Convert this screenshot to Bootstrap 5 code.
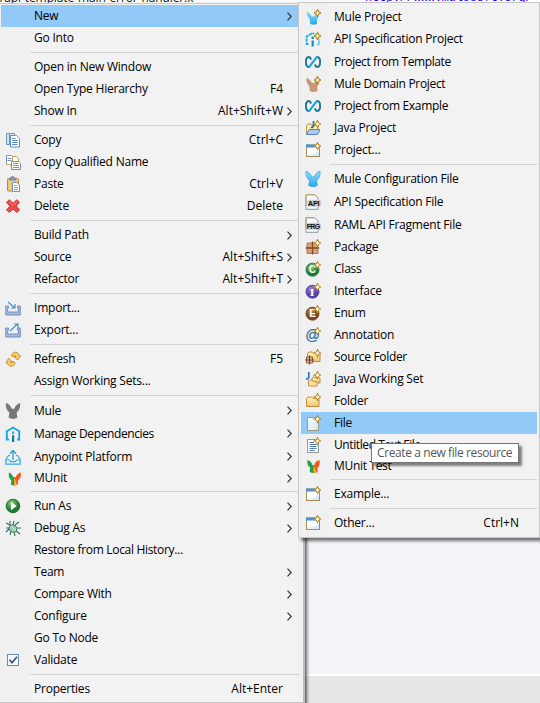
<!DOCTYPE html>
<html lang="en">
<head>
<meta charset="utf-8">
<title>Context menu</title>
<link href="https://cdn.jsdelivr.net/npm/bootstrap@5.3.0/dist/css/bootstrap.min.css" rel="stylesheet">
<style>
body{width:540px;height:703px;overflow:hidden;background:#f3f4f7;font-family:"Open Sans","Noto Sans",sans-serif;font-size:12px;letter-spacing:-.22px;color:#000}
.editor-strip{height:10px;background:#fff;overflow:hidden}
.tab-title{line-height:12px;margin-top:-8px;width:195px;white-space:nowrap;font-size:12px;letter-spacing:-.1px;color:#111}
.code-bit{line-height:12px;margin-top:-8px;color:#2a00ff;font-family:"Liberation Mono",monospace;font-size:12px;font-style:italic}
.editor-body{height:664px}
.status-bar{height:29px;background:#e6e7e9;border-top:2px solid #fff}
.ctx{position:absolute;background:linear-gradient(90deg,#f0f0f0 30px,#f2f2f2 30px);border:1px solid #c8c8c8}
.ctx-main{left:0;top:3px;width:305px;height:700px;padding:1px 2px 0 1px;border-left-width:0;border-right-width:2px;border-right-color:#bcbcbc;box-shadow:2px 2px 3px #0009}
.ctx-sub{left:298px;top:2px;width:242px;height:536px;padding:3px 2px 0 2px;border-color:#c6c6c6;box-shadow:3px 3px 3px #0008}
.mi{height:22px;line-height:22px;white-space:nowrap;padding-left:4px}
.mi>svg,.mi>.blank{width:16px;height:16px;flex:none;margin-right:13px}
.h23{height:23px;line-height:23px}.h20{height:20px;line-height:20px}
.hot{background:#91c9f7}
.snug{letter-spacing:-.32px}
.tight{letter-spacing:-.4px}
.keys{padding-right:2px;letter-spacing:0}
.ctx-sub .keys{padding-right:18px}
.mi>svg.arr{width:5px;height:9px;margin-right:9px}
.mi>.keys+svg.arr{margin-left:2px}
.rule{height:7px;padding:3px 1px 3px 29px}
.ctx-sub .rule{padding:3px 0 3px 29px}
.rule>div{height:1px;background:#d3d3d3}
.tip{position:absolute;left:371px;top:443px;width:148px;height:20px;line-height:18px;background:#fff;border:1px solid #767676;color:#575757;padding-left:5px;white-space:nowrap;box-shadow:3px 3px 2px #0007;letter-spacing:-.4px}
</style>
</head>
<body class="m-0">
<svg width="0" height="0" class="position-absolute" aria-hidden="true">
<defs>
<linearGradient id="gy" x2="0" y2="1"><stop stop-color="#fff3bd"/><stop offset="1" stop-color="#f0c66a"/></linearGradient>
<linearGradient id="gb" x2="0" y2="1"><stop stop-color="#8fdcff"/><stop offset="1" stop-color="#29a9e8"/></linearGradient>
<linearGradient id="gw" x2="1" y2="1"><stop stop-color="#fff"/><stop offset="1" stop-color="#cfe4f5"/></linearGradient>
<radialGradient id="gg" cx=".4" cy=".3"><stop stop-color="#8fd07c"/><stop offset="1" stop-color="#1f7a37"/></radialGradient>
<radialGradient id="gp" cx=".4" cy=".3"><stop stop-color="#9a85d6"/><stop offset="1" stop-color="#55419f"/></radialGradient>
<radialGradient id="gn" cx=".4" cy=".3"><stop stop-color="#b98a50"/><stop offset="1" stop-color="#774618"/></radialGradient>
<symbol id="plus" viewBox="0 0 16 16"><path d="M12.500.5 13.600 2.900 16 4l-2.400 1.100-1.100 2.400-1.100-2.400L9 4l2.400-1.100z" fill="#fff5c2" stroke="#b68a2c" stroke-width="1.100"/><path d="M12.500 2.300v3.400M10.800 4h3.400" stroke="#fff" stroke-width=".8"/></symbol>
<symbol id="plusb" viewBox="0 0 16 16"><path d="M12.500.2 13.800 2.700 16 4l-2.200 1.300-1.300 2.500-1.300-2.500L9 4l2.200-1.300z" fill="#c7a044" stroke="#a88128"/><path d="M12.500 2.200v3.600M10.700 4h3.600" stroke="#fff6cf" stroke-width="1"/></symbol>
<symbol id="ears" viewBox="0 0 16 16"><path d="M1 0c2.700.8 5 3 5.600 5.800h2.800C10 3 12.300.8 15 0c.7 3.800-.6 7.500-3.300 9.200.2 1.800.2 3.400.8 5.300Q8 17.300 3.500 14.500c.6-1.900.7-3.500.8-5.300C1.600 7.500.3 3.800 1 0z"/></symbol>
<symbol id="i-mule" viewBox="0 0 16 16"><use href="#ears" fill="#777"/></symbol>
<symbol id="i-config" viewBox="0 0 16 16"><use href="#ears" fill="url(#gb)" stroke="#2ba3dc" stroke-width=".6"/></symbol>
<symbol id="i-munit" viewBox="0 0 16 16"><path d="M4 2.500c2 .7 3.500 2.400 4 4.500h1.500v8.500q-2 .2-3.600-1l.5-4.300C3.800 8.400 3.200 5.300 4 2.500z" fill="#21a34a"/><path d="M15.900 2.500c-2.800.7-4.500 2.400-5 4.500H9.500L9 15.500q2.500 0 4.100-1.300l-.2-3.800c2.600-1.900 3.300-4.800 3-7.900z" fill="#f4581f"/><path d="M9.500 7.500 12 15l-3 .5z" fill="#ffb329"/></symbol>
<symbol id="i-munit2" viewBox="0 0 16 16"><path d="M2.500 2c2.600.7 4.300 2.600 4.900 5H9v8q-2.500.2-4.300-1l.4-4.400C2.600 8 1.900 5.300 2.500 2z" fill="#21a34a"/><path d="M14.500 2c-3 .7-4.700 2.600-5.200 5H8.500v8q2.500 0 4.100-1l-.2-4c2.200-2 2.600-4.600 2.100-8z" fill="#f4581f"/><path d="m8.800 7 2.600 7.500-2.900.5z" fill="#ffb329"/></symbol>
<symbol id="i-muleproj" viewBox="0 0 16 16"><path d="M2 2.500c2.300 1 4 2.800 4.500 4.700L9 7.500l2-2.500 3 2-2 3.500v4.200q-3.500 2-7 0l-.2-4.500C2.300 8.300 1.500 5.300 2 2.500z" fill="url(#gb)"/><use href="#plusb"/></symbol>
<symbol id="i-domain" viewBox="0 0 16 16"><path d="M2 2.500c2.300 1 4 2.800 4.500 4.700L9 7.500l2-2.500 3 2-2 3.500v4.200q-3.500 2-7 0l-.2-4.500C2.300 8.300 1.500 5.300 2 2.500z" fill="#c99678" stroke="#ad7659" stroke-width=".5"/><use href="#plusb"/></symbol>
<symbol id="house" viewBox="0 0 16 16"><path d="M4 13.500H1.800V5.200L8 1.500l6.200 3.700v8.300H12" fill="none" stroke="#16a7e0" stroke-width="1.900"/><path d="M7 5.500h2.200V8H7z" fill="#35ade0"/><path d="M7 9.200h2.200V16H7z" fill="#1876a3"/></symbol>
<symbol id="i-api" viewBox="0 0 16 16"><path d="M3.500 13H1.600V5.500L7.500 2l2 1" fill="none" stroke="#20ade3" stroke-width="1.800" stroke-dasharray="3.500 .6"/><path d="M13.800 8v5.500H12" fill="none" stroke="#66c8ec" stroke-width="1.600"/><path d="M6.600 5.500h2.200V8H6.600zM6.600 9.500h2.200v6H6.600z" fill="#168bc4"/><use href="#plusb" y="1"/></symbol>
<symbol id="i-loop" viewBox="0 0 16 16"><path d="M6.200 5.500 4.800 3.200H2.500L1 5.500v5l1.500 2.300h2.300M9.800 10.500l1.400 2.300h2.300L15 10.500v-5l-1.500-2.300h-2.300" fill="none" stroke="#12708f" stroke-width="1.800" stroke-linejoin="round"/><path d="M4.300 12.800 11.700 3.200" fill="none" stroke="#11a7dc" stroke-width="2.100"/></symbol>
<symbol id="i-platform" viewBox="0 0 16 16"><path d="M5 6.500H3.500L.8 10.500v4.700h14.400v-4.700l-2.700-4H11M1 11h3.500l1 1.700h5l1-1.700H15" fill="#e7f6fc" stroke="#3aa5da" stroke-width="1.200"/><path d="M8 11V2M5 4.700 8 1.500l3 3.200" fill="none" stroke="#2a9bd3" stroke-width="1.300"/></symbol>
<symbol id="i-copy" viewBox="0 0 16 16"><path d="M1.500 1.500h3v11h-3z" fill="#d7e3ea" stroke="#6c99a5"/><path d="M4.500 1.500h5v11h-5z" fill="#e2eef5" stroke="#7895a6"/><path d="M5.500 3.500h6l3 3v8.500h-9z" fill="#fff" stroke="#688fb3"/><path d="M9.500 3.500h2l3 3v2" fill="none" stroke="#bd9b4d"/><path d="M7 6.500h3.500m-3.500 2h5.500m-5.500 2h5.500m-5.500 2h5.500" stroke="#5b8cc3"/></symbol>
<symbol id="i-qcopy" viewBox="0 0 16 16"><path d="M1.500 1.500h5l2 2v7h-7z" fill="#fff" stroke="#8492b0"/><path d="M2.500 4.500h4m-4 2h4" stroke="#7193c4"/><path d="M7.500 2.500h4l2 2v6h-6z" fill="#fff" stroke="#bd9d56"/><path d="M1.500 10.500h4" stroke="#d0aa51"/><path d="M6.500 7.500h7l2 2v6h-9z" fill="#fff" stroke="#718ab1"/><path d="M8 9.500h5m-5 2h6m-6 2h6" stroke="#6f92c8"/></symbol>
<symbol id="i-paste" viewBox="0 0 16 16"><rect x="2.500" y="2.500" width="11" height="12.500" rx="1" fill="#f3c57c" stroke="#b98645"/><path d="M4.500 4V2.500L6.300.8h2.500l1.800 1.700V4z" fill="#8799bd" stroke="#60749f" stroke-width=".7"/><path d="M7.500 6.500h4.200l2.800 2.500v6.500h-7z" fill="#fff" stroke="#6c96b5"/><path d="M9 9.500h3m-3 2h4m-4 2h4" stroke="#6499d0" stroke-width=".9"/></symbol>
<symbol id="i-delete" viewBox="0 0 16 16"><path d="m4.200 1.700 3.900 3.500 3.800-3.500 2.800 2.700-3.500 3.700 3.500 3.700-2.800 2.700L8.100 11l-3.900 3.500-2.700-2.700L5 8.100 1.500 4.400z" fill="#ed4848" stroke="#c93b42" stroke-linejoin="round"/><path d="m4 3.700 4 3.600 4-3.600" fill="none" stroke="#ff8989" stroke-width=".9"/></symbol>
<symbol id="tray" viewBox="0 0 16 16"><path d="M3.500 6H.7v9h14.600V6h-2.800v2h.8v4H2.700V8h.8z" fill="#a9bce0" stroke="#617fb7" stroke-width=".8"/></symbol>
<symbol id="i-import" viewBox="0 0 16 16"><use href="#tray"/><path d="m3 2 6.500 5.800M6 8h4V4" fill="none" stroke="#4a91bd" stroke-width="1.200"/></symbol>
<symbol id="i-export" viewBox="0 0 16 16"><use href="#tray"/><path d="m5 9 7.500-7M9 2h4v4" fill="none" stroke="#4a91bd" stroke-width="1.200"/></symbol>
<symbol id="i-refresh" viewBox="0 0 16 16"><g fill="#f8cf6c" stroke="#c0831f" stroke-width=".9" stroke-linejoin="round"><path d="M6.500 5C7 2 9.500.5 12 1.500c1.300.5 1.800 1.500 2 3l1.500.3L12.500 9 9.200 5.500l1.800-.2c-.3-1.300-1.200-1-1.600.7z"/><path d="M10 11.500c-.5 3-3 4.300-5.500 3.300-1.300-.5-1.900-1.500-2-3L1 11.500l2.700-4.200L7 10.800l-1.700.2c.3 1.300 1.300 1 1.700-.7z"/></g></symbol>
<symbol id="i-run" viewBox="0 0 16 16"><circle cx="8" cy="8" r="6.800" fill="url(#gg)" stroke="#276f3b"/><path d="m6 3.800 5.500 4.200L6 12.200z" fill="#fff"/></symbol>
<symbol id="i-debug" viewBox="0 0 16 16"><path d="M5 1v4L1 3m0 5h4l-4 4m5-1-1 4m4-3 1 4m1-5 4 3m-3-6h4M10 5l4-3M8 5l1-4" fill="none" stroke="#336e66" stroke-width="1.100"/><ellipse cx="8.300" cy="8.500" rx="4" ry="3.500" transform="rotate(35 8 8)" fill="#9ecfab" stroke="#32766b"/><path d="m6 6 5 5" stroke="#e4f5db"/></symbol>
<symbol id="i-check" viewBox="0 0 16 16"><rect x="2.500" y="2.500" width="11" height="11" fill="#f3f8fd" stroke="#7189aa"/><path d="m4.500 7.800 2.500 3 5-6" fill="none" stroke="#354b74" stroke-width="1.600"/></symbol>
<symbol id="fold" viewBox="0 0 16 16"><path d="M1.500 13.500V5.500L3 4h3.500L8 5.500h6v8z" fill="url(#gy)" stroke="#c08b3f"/></symbol>
<symbol id="i-java" viewBox="0 0 16 16"><path d="M1.500 14V5.500L3 4h3l1 1.500h6V10" fill="#fff0b2" stroke="#bb9147"/><path d="M4 9.500h11l-2.500 5h-11z" fill="#acc9f2" stroke="#5a80c2"/><path d="M8.500 1v4.500q0 2-2.500 1.800" fill="none" stroke="#2b6b91" stroke-width="1.700"/><use href="#plus"/></symbol>
<symbol id="i-window" viewBox="0 0 16 16"><rect x="1.500" y="3" width="13" height="11.500" fill="url(#gw)" stroke="#a28d55"/><path d="M1 2.500h13v3H1z" fill="#4b91d2"/><path d="M2 6h12v2Q10 13 2 12z" fill="#fff"/><use href="#plus"/></symbol>
<symbol id="doc" viewBox="0 0 16 16"><path d="M1 .7h8.500L13 4v11.300H1z" fill="#f8fbff" stroke="#8598ab"/><path d="M1 12V.7h8.500L13 4" fill="none" stroke="#b7a66c"/></symbol>
<symbol id="i-apidoc" viewBox="0 0 16 16"><use href="#doc"/><rect x="2.500" y="5.700" width="13.500" height="7" rx="2" fill="#ccc"/><text x="2.800" y="12" font-family="Liberation Sans,sans-serif" font-size="7.500" font-weight="700" letter-spacing="-.3" fill="#111">API</text></symbol>
<symbol id="i-frg" viewBox="0 0 16 16"><use href="#doc"/><rect x="2" y="5.700" width="14" height="7" rx="2" fill="#ccc"/><text x="1.700" y="12" font-family="Liberation Sans,sans-serif" font-size="7" font-weight="700" letter-spacing="-.6" fill="#111">FRG</text></symbol>
<symbol id="i-package" viewBox="0 0 16 16"><path d="M2 4h11v10.500H2z" fill="#d7a178" stroke="#b77b56"/><path d="M7.500 2.500v13M.8 9h13.400" stroke="#804928" stroke-width="1.300"/><use href="#plus"/></symbol>
<symbol id="i-class" viewBox="0 0 16 16"><circle cx="7.500" cy="8.700" r="6.500" fill="url(#gg)" stroke="#287d40"/><text x="3.800" y="12.400" font-family="Liberation Sans,sans-serif" font-size="10" font-weight="700" fill="#fff">C</text><use href="#plus"/></symbol>
<symbol id="i-iface" viewBox="0 0 16 16"><circle cx="7.500" cy="8.700" r="6.500" fill="url(#gp)" stroke="#5d48a6"/><text x="4.800" y="12.500" font-family="DejaVu Serif,serif" font-size="10" font-weight="700" fill="#fff">I</text><use href="#plus"/></symbol>
<symbol id="i-enum" viewBox="0 0 16 16"><circle cx="7.500" cy="8.700" r="6.500" fill="url(#gn)" stroke="#805025"/><text x="4.200" y="12.300" font-family="Liberation Sans,sans-serif" font-size="10" font-weight="700" fill="#fff">E</text><use href="#plus"/></symbol>
<symbol id="i-annot" viewBox="0 0 16 16"><text x=".2" y="13" font-family="Liberation Sans,sans-serif" font-size="14.500" fill="#276da1" stroke="#276da1" stroke-width=".2">@</text><use href="#plus"/></symbol>
<symbol id="i-source" viewBox="0 0 16 16"><use href="#fold" x="1" y="-1"/><path d="M1.500 8h6v6h-6z" fill="#dfb693" stroke="#8d5b3c"/><path d="M4.500 6.500v9M0 11h9" stroke="#68402b"/><use href="#plus"/></symbol>
<symbol id="i-jws" viewBox="0 0 16 16"><path d="M3.800 1v5q0 2-2.800 1.800" fill="none" stroke="#2d75ad" stroke-width="1.700"/><path d="M7 11V7l1-1h2l1 1h4v5z" fill="url(#gy)" stroke="#bd8744"/><path d="M3.500 15v-5l1-1h2.500l1 1.500h4V15z" fill="#ffe0a3" stroke="#c88a4b"/><use href="#plus"/></symbol>
<symbol id="i-folder" viewBox="0 0 16 16"><use href="#fold"/><use href="#plus"/></symbol>
<symbol id="i-file" viewBox="0 0 16 16"><path d="M2.500 2.500h8L13.500 6v9.500h-11z" fill="url(#gw)" stroke="#9b9984"/><use href="#plus"/></symbol>
<symbol id="i-text" viewBox="0 0 16 16"><path d="M2.500 2.500h8L13.500 6v9.500h-11z" fill="#fff" stroke="#8f9b9b"/><path d="M4.500 5.500H9m-4.500 2h7m-7 2h7m-7 2h7m-7 2h5" stroke="#557dbb"/><use href="#plus"/></symbol>
<symbol id="i-arr" viewBox="0 0 5 9"><path d="m.5.7 3.700 3.800L.5 8.300" fill="none" stroke="#333" stroke-width="1.200"/></symbol>
</defs>
</svg>

<div class="editor-strip d-flex"><div class="tab-title overflow-hidden">/api-template-main-error-handler.x</div><div class="bg-light flex-fill"></div><div class="code-bit">&nbsp;http://www.mulesoft.org/&nbsp;</div></div>
<div class="editor-body"></div>
<div class="status-bar"></div>

<nav class="ctx ctx-main" aria-label="Project menu">
<div class="mi hot d-flex align-items-center"><span class="blank"></span><span>New</span><svg class="arr ms-auto"><use href="#i-arr"/></svg></div>
<div class="mi d-flex align-items-center"><span class="blank"></span><span>Go Into</span></div>
<div class="rule"><div></div></div>
<div class="mi d-flex align-items-center"><span class="blank"></span><span>Open in New Window</span></div>
<div class="mi d-flex align-items-center"><span class="blank"></span><span>Open Type Hierarchy</span><span class="keys ms-auto me-3">F4</span></div>
<div class="mi d-flex align-items-center"><span class="blank"></span><span>Show In</span><span class="keys ms-auto">Alt+Shift+W</span><svg class="arr"><use href="#i-arr"/></svg></div>
<div class="rule"><div></div></div>
<div class="mi d-flex align-items-center"><svg><use href="#i-copy"/></svg><span>Copy</span><span class="keys ms-auto me-3">Ctrl+C</span></div>
<div class="mi d-flex align-items-center"><svg><use href="#i-qcopy"/></svg><span>Copy Qualified Name</span></div>
<div class="mi d-flex align-items-center"><svg><use href="#i-paste"/></svg><span>Paste</span><span class="keys ms-auto me-3">Ctrl+V</span></div>
<div class="mi d-flex align-items-center"><svg><use href="#i-delete"/></svg><span>Delete</span><span class="keys snug ms-auto me-3">Delete</span></div>
<div class="rule"><div></div></div>
<div class="mi d-flex align-items-center"><span class="blank"></span><span>Build Path</span><svg class="arr ms-auto"><use href="#i-arr"/></svg></div>
<div class="mi d-flex align-items-center"><span class="blank"></span><span>Source</span><span class="keys ms-auto">Alt+Shift+S</span><svg class="arr"><use href="#i-arr"/></svg></div>
<div class="mi d-flex align-items-center"><span class="blank"></span><span>Refactor</span><span class="keys ms-auto">Alt+Shift+T</span><svg class="arr"><use href="#i-arr"/></svg></div>
<div class="rule"><div></div></div>
<div class="mi d-flex align-items-center"><svg><use href="#i-import"/></svg><span>Import...</span></div>
<div class="mi d-flex align-items-center"><svg><use href="#i-export"/></svg><span>Export...</span></div>
<div class="rule"><div></div></div>
<div class="mi d-flex align-items-center"><svg><use href="#i-refresh"/></svg><span>Refresh</span><span class="keys ms-auto me-3">F5</span></div>
<div class="mi d-flex align-items-center"><span class="blank"></span><span>Assign Working Sets...</span></div>
<div class="rule"><div></div></div>
<div class="mi h23 d-flex align-items-center"><svg><use href="#i-mule"/></svg><span>Mule</span><svg class="arr ms-auto"><use href="#i-arr"/></svg></div>
<div class="mi h23 d-flex align-items-center"><svg><use href="#house"/></svg><span class="tight">Manage Dependencies</span><svg class="arr ms-auto"><use href="#i-arr"/></svg></div>
<div class="mi h23 d-flex align-items-center"><svg><use href="#i-platform"/></svg><span>Anypoint Platform</span><svg class="arr ms-auto"><use href="#i-arr"/></svg></div>
<div class="mi h20 d-flex align-items-center"><svg><use href="#i-munit"/></svg><span>MUnit</span><svg class="arr ms-auto"><use href="#i-arr"/></svg></div>
<div class="rule"><div></div></div>
<div class="mi d-flex align-items-center"><svg><use href="#i-run"/></svg><span>Run As</span><svg class="arr ms-auto"><use href="#i-arr"/></svg></div>
<div class="mi d-flex align-items-center"><svg><use href="#i-debug"/></svg><span>Debug As</span><svg class="arr ms-auto"><use href="#i-arr"/></svg></div>
<div class="mi d-flex align-items-center"><span class="blank"></span><span class="snug">Restore from Local History...</span></div>
<div class="mi d-flex align-items-center"><span class="blank"></span><span>Team</span><svg class="arr ms-auto"><use href="#i-arr"/></svg></div>
<div class="mi d-flex align-items-center"><span class="blank"></span><span>Compare With</span><svg class="arr ms-auto"><use href="#i-arr"/></svg></div>
<div class="mi d-flex align-items-center"><span class="blank"></span><span>Configure</span><svg class="arr ms-auto"><use href="#i-arr"/></svg></div>
<div class="mi d-flex align-items-center"><span class="blank"></span><span>Go To Node</span></div>
<div class="mi d-flex align-items-center"><svg><use href="#i-check"/></svg><span>Validate</span></div>
<div class="rule"><div></div></div>
<div class="mi d-flex align-items-center"><span class="blank"></span><span>Properties</span><span class="keys ms-auto me-3">Alt+Enter</span></div>
</nav>

<nav class="ctx ctx-sub" aria-label="New">
<div class="mi d-flex align-items-center"><svg><use href="#i-muleproj"/></svg><span>Mule Project</span></div>
<div class="mi d-flex align-items-center"><svg><use href="#i-api"/></svg><span>API Specification Project</span></div>
<div class="mi h23 d-flex align-items-center"><svg><use href="#i-loop"/></svg><span class="tight">Project from Template</span></div>
<div class="mi d-flex align-items-center"><svg><use href="#i-domain"/></svg><span class="snug">Mule Domain Project</span></div>
<div class="mi d-flex align-items-center"><svg><use href="#i-loop"/></svg><span class="snug">Project from Example</span></div>
<div class="mi d-flex align-items-center"><svg><use href="#i-java"/></svg><span>Java Project</span></div>
<div class="mi d-flex align-items-center"><svg><use href="#i-window"/></svg><span>Project...</span></div>
<div class="rule"><div></div></div>
<div class="mi d-flex align-items-center"><svg><use href="#i-config"/></svg><span>Mule Configuration File</span></div>
<div class="mi h23 d-flex align-items-center"><svg><use href="#i-apidoc"/></svg><span>API Specification File</span></div>
<div class="mi h23 d-flex align-items-center"><svg><use href="#i-frg"/></svg><span>RAML API Fragment File</span></div>
<div class="mi d-flex align-items-center"><svg><use href="#i-package"/></svg><span>Package</span></div>
<div class="mi d-flex align-items-center"><svg><use href="#i-class"/></svg><span>Class</span></div>
<div class="mi d-flex align-items-center"><svg><use href="#i-iface"/></svg><span>Interface</span></div>
<div class="mi d-flex align-items-center"><svg><use href="#i-enum"/></svg><span>Enum</span></div>
<div class="mi d-flex align-items-center"><svg><use href="#i-annot"/></svg><span>Annotation</span></div>
<div class="mi d-flex align-items-center"><svg><use href="#i-source"/></svg><span class="snug">Source Folder</span></div>
<div class="mi d-flex align-items-center"><svg><use href="#i-jws"/></svg><span>Java Working Set</span></div>
<div class="mi d-flex align-items-center"><svg><use href="#i-folder"/></svg><span>Folder</span></div>
<div class="mi hot d-flex align-items-center"><svg><use href="#i-file"/></svg><span>File</span></div>
<div class="mi d-flex align-items-center"><svg><use href="#i-text"/></svg><span class="tight">Untitled Text File</span></div>
<div class="mi h20 d-flex align-items-center"><svg><use href="#i-munit2"/></svg><span class="snug">MUnit Test</span></div>
<div class="rule"><div></div></div>
<div class="mi d-flex align-items-center"><svg><use href="#i-window"/></svg><span>Example...</span></div>
<div class="rule"><div></div></div>
<div class="mi d-flex align-items-center"><svg><use href="#i-window"/></svg><span>Other...</span><span class="keys ms-auto">Ctrl+N</span></div>
</nav>
<div class="tip" role="tooltip">Create a new file resource</div>
<script src="https://cdn.jsdelivr.net/npm/bootstrap@5.3.0/dist/js/bootstrap.bundle.min.js"></script>
</body>
</html>
